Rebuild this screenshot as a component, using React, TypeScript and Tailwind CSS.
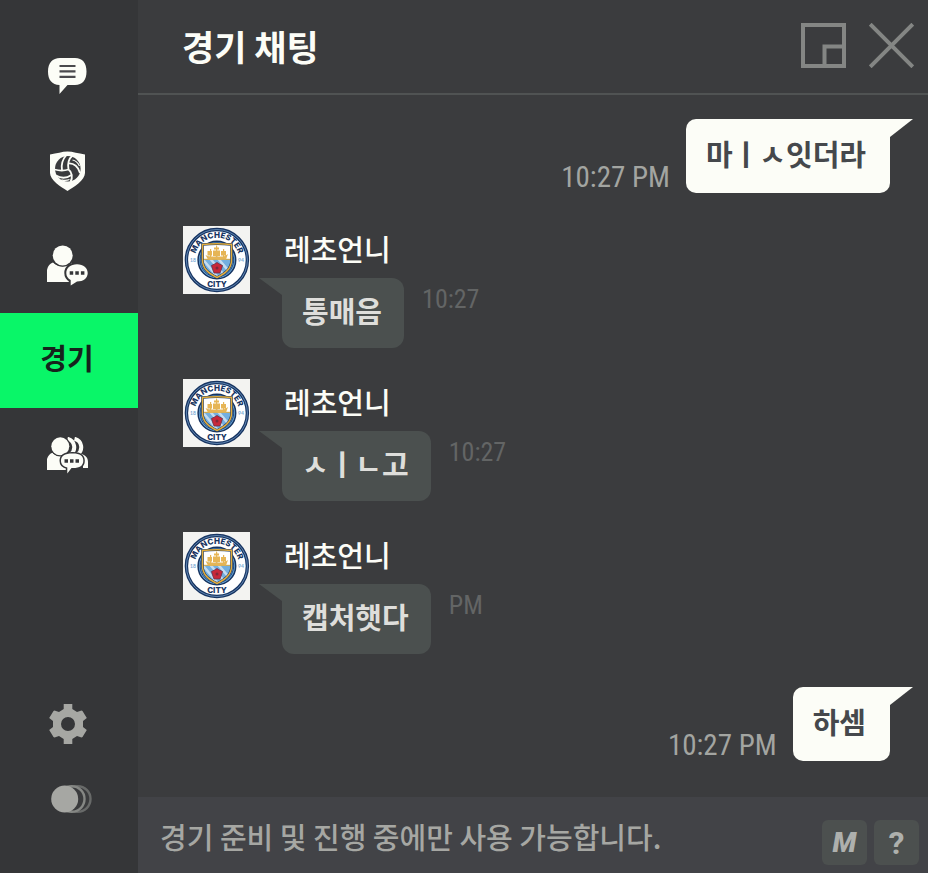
import React, { useId } from "react";

type Message = {
  id: number;
  mine: boolean;
  text: string;
  time: string;
};

const messages: Message[] = [
  { id: 1, mine: true, text: "마ㅣㅅ잇더라", time: "10:27 PM" },
  { id: 2, mine: false, text: "통매음", time: "10:27" },
  { id: 3, mine: false, text: "ㅅㅣㄴ고", time: "10:27" },
  { id: 4, mine: false, text: "캡처햇다", time: "PM" },
  { id: 5, mine: true, text: "하셈", time: "10:27 PM" },
];

const ChatIcon = () => (
  <svg width="39" height="36" viewBox="0 0 39 36" aria-hidden="true">
    <path
      d="M12 0H27C34.500 0 38.500 5 38.500 13.500C38.500 22 34.500 27 27 27H19.500L11.500 36V27C4 26.500 0 22 0 13.500C0 5 4.500 0 12 0Z"
      fill="#fcfdf7"
    />
    <path d="M11.500 8H27.500M11.500 13.400H27.500M11.500 18.800H27.500" stroke="#4b4a4e" strokeWidth="2.200" />
  </svg>
);

const ClubIcon = () => (
  <svg width="35" height="40" viewBox="0 0 35 40" aria-hidden="true">
    <path
      d="M0 3.500C7 2.500 12 0.500 17.500 0.500S28 2.500 35 3.500V22C35 29 24 36 17.500 40C11 36 0 29 0 22Z"
      fill="#fcfdf7"
    />
    <circle cx="17.800" cy="17.700" r="12.800" fill="#3a3b3d" />
    <g fill="none" stroke="#fcfdf7" strokeWidth="1.800">
      <path d="M18.500 18.500C17.500 13.500 18.500 8 22.500 4.500M18.500 18.500C14 20 9 19.800 4.500 18.500M18.500 18.500C22 21 23 26 20.500 31" />
      <path d="M12 19.300C11 13.500 12.500 8.500 16 4.500" />
      <path d="M18.500 12.500C24 12 28.500 16 30 22" />
      <path d="M21.500 24C16.500 27.500 11 27.500 6 24.500" />
    </g>
    <path d="M22.500 9C25.500 9.500 28 12 29.500 15M19.500 28.500C17 29.500 14 29.500 11.500 28.800" fill="none" stroke="#fcfdf7" strokeWidth="1.200" />
  </svg>
);

const FriendIcon = () => (
  <svg width="41" height="41" viewBox="0 0 41 41" aria-hidden="true">
    <path d="M0 37V25C1 20.500 3 18.500 6 17.500C11 22.500 20 22.500 25 17.500V37Z" fill="#fcfdf7" />
    <circle cx="15.700" cy="10.400" r="11.300" fill="#353638" />
    <circle cx="15.700" cy="10.400" r="10" fill="#fcfdf7" />
    <path
      d="M30 19.200C36.500 19.200 40.700 22.800 40.700 28S36.500 36.500 30 36.500L23.700 40.500V35C20.800 33.500 19.300 31 19.300 28C19.300 22.800 23.500 19.200 30 19.200Z"
      fill="#fcfdf7"
      stroke="#353638"
      strokeWidth="4"
      paintOrder="stroke"
    />
    <path d="M22.700 26.300H26.200V29.800H22.700ZM28.300 26.300H31.800V29.800H28.300ZM33.900 26.300H37.400V29.800H33.900Z" fill="#353638" />
  </svg>
);

const GroupIcon = () => (
  <svg width="41" height="37" viewBox="0 0 41 37" aria-hidden="true">
    <g fill="none" stroke="#fcfdf7" strokeWidth="4">
      <path d="M20.500 1.800C28 3.500 29.500 13 23.500 17.500" />
      <path d="M27.500 1.800C35 3.500 36.500 13 30.500 17.500" />
    </g>
    <path d="M33 16.500C38 18 41 20 41 25V31H36V23Z" fill="#fcfdf7" />
    <path d="M0 33V22C1 18.500 3 16.500 5.500 15.700C9 20 17 20 21 15.700V33Z" fill="#fcfdf7" />
    <circle cx="13.300" cy="9.300" r="10.200" fill="#353638" />
    <circle cx="13.300" cy="9.300" r="9" fill="#fcfdf7" />
    <path
      d="M25 16.500H26C33 16.500 36.300 19 36.300 23.700S33 31 26 31H24.500L20.300 36.500V30.500C16 29.500 14 27 14 23.700C14 19 18 16.500 25 16.500Z"
      fill="#fcfdf7"
      stroke="#353638"
      strokeWidth="3"
      paintOrder="stroke"
    />
    <path d="M17.500 22.200H21V25.700H17.500ZM23 22.200H26.500V25.700H23ZM28.500 22.200H32V25.700H28.500Z" fill="#353638" />
  </svg>
);

const GearIcon = () => (
  <svg width="40" height="40" viewBox="-20 -20 40 40" fill="#a6a7a3" aria-hidden="true">
    <path
      d="M-4.300 -20H4.300V-15L9 -12L13.500 -13.500L14.500 -13L18.800 -6L15 -3V3L18.800 6L14.500 13L13.500 13.500L9 12L4.300 15V20H-4.300V15L-9 12L-13.500 13.500L-14.500 13L-18.800 6L-15 3V-3L-18.800 -6L-14.500 -13L-13.500 -13.500L-9 -12L-4.300 -15ZM0 -7A7 7 0 1 0 0 7A7 7 0 1 0 0 -7Z"
      fillRule="evenodd"
    />
  </svg>
);

const StatusIcon = () => (
  <svg width="41" height="28" viewBox="0 0 41 28" aria-hidden="true">
    <circle cx="26.700" cy="14" r="12.800" fill="#3a3b3d" stroke="#686a69" strokeWidth="2.400" />
    <circle cx="20.700" cy="14" r="12.800" fill="#3a3b3d" stroke="#858784" strokeWidth="2.400" />
    <circle cx="13.700" cy="14" r="13.500" fill="#a6a7a3" />
  </svg>
);

const MinimizeIcon = () => (
  <svg width="45" height="45" viewBox="0 0 45 45" fill="none" stroke="#848684" strokeWidth="4" aria-hidden="true">
    <path d="M2 2H43V43H2ZM43 23.500H23.500V43" />
  </svg>
);

const CloseIcon = () => (
  <svg width="45" height="45" viewBox="0 0 45 45" fill="none" stroke="#848684" strokeWidth="4" aria-hidden="true">
    <path d="M1.200 1.200L43.800 43.800M43.800 1.200L1.200 43.800" />
  </svg>
);

const Crest = () => {
  const id = useId();

  return (
    <svg width="67" height="68" viewBox="0 0 67 68" role="img" aria-label="Manchester City" className="shrink-0 bg-[#f3f3f1]">
      <defs>
        <path id={`${id}-arc`} d="M12.100 38A22.200 22.200 0 1 1 55.700 38" />
        <clipPath id={`${id}-shield`}>
          <path d="M19.500 18.500Q34 17 48.500 18.500V34C48.500 43 42 47.500 34 51.500C26 47.500 19.500 43 19.500 34Z" />
        </clipPath>
      </defs>
      <circle cx="33.900" cy="34" r="30.500" fill="#fff" stroke="#173461" strokeWidth="3.400" />
      <circle cx="33.900" cy="34" r="30.500" fill="none" stroke="#7fa9d6" strokeWidth="0.700" />
      <circle cx="33.900" cy="34" r="18.800" fill="#6caddf" stroke="#173461" strokeWidth="1.500" />
      <circle cx="33.900" cy="34" r="16.800" fill="none" stroke="#24477b" strokeWidth="1" />
      <g clipPath={`url(#${id}-shield)`}>
        <path d="M18 16H50V33H18Z" fill="#fff" />
        <path d="M18 33H50V53H18Z" fill="#73afe0" />
        <path d="M17 30L38 55M25 30L46 55M33 30L54 55" stroke="#c5dcf0" strokeWidth="2.500" />
        <path d="M19 33.300H49" stroke="#dfaa3d" strokeWidth="1" />
      </g>
      <path
        d="M19.500 18.500Q34 17 48.500 18.500V34C48.500 43 42 47.500 34 51.500C26 47.500 19.500 43 19.500 34Z"
        fill="none"
        stroke="#173461"
        strokeWidth="2.600"
      />
      <path
        d="M19.500 18.500Q34 17 48.500 18.500V34C48.500 43 42 47.500 34 51.500C26 47.500 19.500 43 19.500 34Z"
        fill="none"
        stroke="#e3ad3c"
        strokeWidth="1.500"
      />
      <path
        d="M22.500 29L26 30.500H41L45 28L43 33.500H25ZM24.500 25H29V29.500H24.500ZM30 24.500H37V30H30ZM38 25H43V29.500H38ZM31 21.500H36V23.500H31ZM33 19.500H34.200V31H33ZM27 23H28.200V31H27ZM40 23H41.200V31H40Z"
        fill="#e6b556"
      />
      <path
        d="M34 36.500L36.500 38L39.500 39.500L38.500 43L37 47H31L29.500 43L28.500 39.500L31.500 38Z"
        fill="#c8283a"
        stroke="#673048"
        strokeWidth="0.800"
      />
      <circle cx="34" cy="42" r="1.500" fill="#80283a" />
      <text className="font-['Inter','Liberation_Sans',sans-serif] font-extrabold" fontSize="8" fill="#173461" textAnchor="middle">
        <textPath href={`#${id}-arc`} startOffset="50%">
          MANCHESTER
        </textPath>
      </text>
      <text x="34" y="60.500" className="font-['Inter','Liberation_Sans',sans-serif] font-extrabold" fontSize="8" fill="#173461" textAnchor="middle">
        CITY
      </text>
      <text x="10" y="35.500" className="font-['Lato',sans-serif] font-bold" fontSize="5" fill="#78a9d4" textAnchor="middle">
        18
      </text>
      <text x="58" y="35.500" className="font-['Lato',sans-serif] font-bold" fontSize="5" fill="#78a9d4" textAnchor="middle">
        94
      </text>
    </svg>
  );
};

const tabs = [
  { label: "채팅", icon: <ChatIcon /> },
  { label: "클럽", icon: <ClubIcon /> },
  { label: "친구", icon: <FriendIcon /> },
  { label: "경기", icon: null },
  { label: "그룹", icon: <GroupIcon /> },
];

const Sidebar = () => (
  <nav className="flex w-[138px] shrink-0 flex-col justify-between bg-[#353638] pt-7 pb-[37px]">
    <div className="flex flex-col">
      {tabs.map((tab) =>
        tab.icon ? (
          <button key={tab.label} aria-label={tab.label} className="flex h-[95px] items-center justify-center pr-1">
            {tab.icon}
          </button>
        ) : (
          <button
            key={tab.label}
            aria-current="page"
            className="flex h-[95px] items-center justify-center bg-[#09f668] pr-1 pb-[6px] text-[29px] leading-none font-bold text-[#16231c]"
          >
            {tab.label}
          </button>
        ),
      )}
    </div>
    <div className="flex flex-col">
      <button aria-label="설정" className="flex h-[75px] items-center justify-center pr-[2px]">
        <GearIcon />
      </button>
      <button aria-label="상태" className="flex h-[75px] items-center justify-center pl-1">
        <StatusIcon />
      </button>
    </div>
  </nav>
);

const SentMessage = ({ message }: { message: Message }) => (
  <li className="flex items-end justify-end gap-4 py-[2px] pr-[38px]">
    <time className="font-['Roboto_Condensed','Roboto',sans-serif] text-[29px] leading-8 text-[#a3a5a1]">
      {message.time}
    </time>
    <div className="relative rounded-[10px] rounded-tr-none bg-[#fcfdf7] pt-[14px] pr-6 pb-5 pl-5 text-[29px] leading-10 font-bold text-[#45484c]">
      {message.text}
      <svg width="23" height="18" viewBox="0 0 23 18" className="absolute top-0 left-full" aria-hidden="true">
        <path d="M0 0H23L0 18Z" fill="#fcfdf7" />
      </svg>
    </div>
  </li>
);

const ReceivedMessage = ({ message }: { message: Message }) => (
  <li className="flex items-start pl-[45px]">
    <Crest />
    <div className="pl-8">
      <p className="h-[52px] pl-[2px] text-[29px] leading-[44px] font-medium text-[#fcfdf7]">레초언니</p>
      <div className="flex items-start gap-[18px]">
        <div className="relative rounded-[12px] rounded-tl-none bg-[#4b504f] pt-3 pr-[22px] pb-[18px] pl-5 text-[29px] leading-10 font-bold text-[#dededb]">
          {message.text}
          <svg width="23" height="17" viewBox="0 0 23 17" className="absolute top-0 right-full" aria-hidden="true">
            <path d="M23 0H0L23 17Z" fill="#4b504f" />
          </svg>
        </div>
        <time className="pt-[6px] font-['Roboto_Condensed','Roboto',sans-serif] text-[26px] leading-[30px] text-[#636565]">
          {message.time}
        </time>
      </div>
    </div>
  </li>
);

const App: React.FC = () => {
  return (
    <div className="flex min-h-screen bg-[#3b3c3e] font-['Noto_Sans_CJK_KR',sans-serif]">
      <Sidebar />

      <main className="flex min-w-0 flex-1 flex-col">
        <header className="flex items-center justify-between border-b-2 border-[#505353] pt-[23px] pr-[14px] pb-[25px] pl-11">
          <h1 className="text-[35px] leading-[45px] font-bold text-[#fcfdf7]">경기 채팅</h1>
          <div className="flex gap-[23px]">
            <button aria-label="작게 보기">
              <MinimizeIcon />
            </button>
            <button aria-label="닫기">
              <CloseIcon />
            </button>
          </div>
        </header>

        <ul className="flex flex-1 flex-col gap-[31px] pt-[22px] pb-6">
          {messages.map((message) =>
            message.mine ? (
              <SentMessage key={message.id} message={message} />
            ) : (
              <ReceivedMessage key={message.id} message={message} />
            ),
          )}
        </ul>

        <footer className="flex items-end gap-[7px] bg-[#424347] pt-4 pr-[9px] pb-2 pl-[22px]">
          <input
            type="text"
            disabled
            aria-label="메시지"
            placeholder="경기 준비 및 진행 중에만 사용 가능합니다."
            className="mb-[7px] h-[45px] min-w-0 flex-1 bg-transparent text-[29px] font-medium placeholder:text-[#a6a7a3]"
          />
          <button className="size-[45px] rounded-md bg-[#4c504f] font-['Roboto',sans-serif] text-[28px] leading-none font-black text-[#aeb0ad] italic">
            M
          </button>
          <button className="size-[45px] rounded-md bg-[#4c504f] font-['Roboto',sans-serif] text-[32px] leading-none font-bold text-[#aeb0ad]">
            ?
          </button>
        </footer>
      </main>
    </div>
  );
};

export default App;
